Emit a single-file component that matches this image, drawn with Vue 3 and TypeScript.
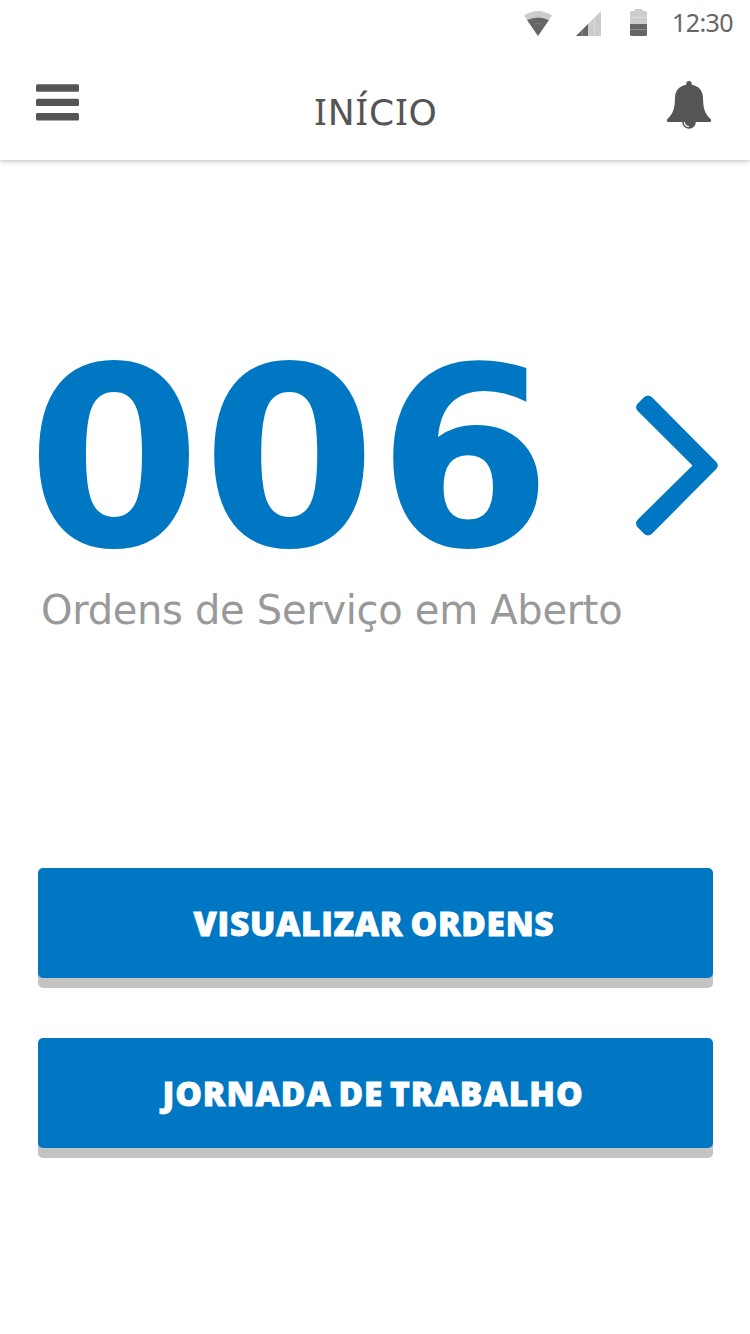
<script setup lang="ts">
import { ref } from 'vue'

interface Action {
  id: string
  label: string
}

const time = ref('12:30')
const openOrders = ref('006')
const actions: Action[] = [
  { id: 'orders', label: 'VISUALIZAR ORDENS' },
  { id: 'journey', label: 'JORNADA DE TRABALHO' },
]
</script>

<template>
  <div class="screen">
    <header class="header">
      <div class="status">
        <svg class="wifi" width="28" height="25" viewBox="0 0 28 25">
          <path fill="#ccc" d="M0 4.500Q14-4.500 28 4.500L14 25Z" />
          <path fill="#666" d="M3.100 9Q14 4 24.900 9L14 25Z" />
          <path fill="none" stroke="#858585" stroke-width=".7" d="M10.500 13q3.500-1.400 7 0M7 10q1-1 2-.8" />
        </svg>
        <svg class="signal" width="26" height="25" viewBox="0 0 26 25">
          <path fill="#ccc" d="M25 0V25H0Z" />
          <path fill="#666" d="M12 13V25H0Z" />
          <path fill="none" stroke="#e2e2e2" stroke-width=".7" d="M18.500 6.500V25" />
          <path fill="none" stroke="#999" stroke-width=".7" d="M6.300 18.700V25" />
        </svg>
        <svg class="battery" width="17" height="27" viewBox="0 0 17 27">
          <path fill="#ccc" d="M4.500 0h8v2H16l1 1v12H0V3l1-1h3.500Z" />
          <path fill="#666" d="M0 15h17v11l-1 1H1l-1-1Z" />
          <path stroke="#e2e2e2" stroke-width=".8" d="M0 8.500H17" />
          <path stroke="#999" stroke-width=".8" d="M0 20.500H17" />
        </svg>
        <span class="time">{{ time }}</span>
      </div>
      <div class="bar">
        <button class="icon-button" aria-label="Menu">
          <svg class="menu" width="43" height="37" viewBox="0 0 43 37" fill="#555">
            <rect y="0.300" width="43" height="7.500" rx="1.500" />
            <rect y="14.700" width="43" height="7.300" rx="1.500" />
            <rect y="29" width="43" height="7.500" rx="1.500" />
          </svg>
        </button>
        <h1 class="title"><span class="i">I</span>N<span class="i">Í</span>C<span class="i">I</span>O</h1>
        <button class="icon-button" aria-label="Notificações">
          <svg class="bell" width="46" height="49" viewBox="0 0 46 49">
            <path fill="#555" d="M20.300 4.800V3.600a2.700 2.700 0 0 1 5.400 0v1.200C32 5.800 37 10.500 37 17.500C37 29 39.500 34.500 44 38.400C46 40 45 42 43.300 42H2.700C1 42 0 40 2 38.400C6.500 34.500 9 29 9 17.500C9 10.500 14 5.800 20.300 4.800Z" />
            <circle cx="23" cy="42" r="6.800" fill="#555" />
            <path fill="none" stroke="#fff" stroke-width="1.200" stroke-linecap="round" d="M18.400 42.600A4.700 4.700 0 0 0 22.500 46.500" />
          </svg>
        </button>
      </div>
    </header>

    <main class="content">
      <section class="summary">
        <div class="count-row">
          <strong class="count">{{ openOrders }}</strong>
          <svg class="chevron" width="82" height="141" viewBox="0 0 82 141" fill="#0077c3">
            <path d="M8 2.200Q12 -1.300 16 2.200L80.200 67Q83.500 70.500 80.200 74L16 138.700Q12 142.200 8 138.700L1.800 132.500Q-1.700 128.500 1.800 124.500L56.500 70.500L1.800 16Q-1.700 12 1.800 8.500Z" />
          </svg>
        </div>
        <p class="caption">Ordens de Serviço em Aberto</p>
      </section>
      <nav class="actions">
        <button v-for="action in actions" :key="action.id" class="action" :class="action.id">
          <span>{{ action.label }}</span>
        </button>
      </nav>
    </main>
  </div>
</template>

<style>
body {
  margin: 0;
  background: #fff;
}
</style>

<style scoped>
.screen {
  width: 750px;
  height: 1334px;
  overflow: hidden;
  background: #fff;
  font-family: "DejaVu Sans", Verdana, sans-serif;
}
.header {
  box-sizing: border-box;
  height: 160px;
  box-shadow: 0 1px 5px rgba(0, 0, 0, .28);
}
.status {
  display: flex;
  align-items: flex-start;
  justify-content: flex-end;
  height: 46px;
  padding-right: 17px;
}
.wifi { margin: 11px 24px 0 0; }
.signal { margin: 11px 28px 0 0; }
.battery { margin: 9px 25px 0 0; }
.time {
  width: 61px;
  margin-top: 5px;
  color: #666;
  font: 25px/34px "Noto Sans", sans-serif;
  letter-spacing: -.6px;
  white-space: nowrap;
}
.bar {
  display: flex;
  align-items: flex-start;
  justify-content: space-between;
  padding: 34px 38px 0 36px;
}
.icon-button {
  padding: 0;
  border: 0;
  background: none;
}
.icon-button svg { display: block; }
.menu { margin-top: 4px; }
.title {
  display: flex;
  align-items: baseline;
  margin: 10px 0 0 4px;
  color: #555;
  font-weight: 400;
  font-size: 36px;
  line-height: 42px;
  letter-spacing: -.6px;
}
.title .i {
  width: 15px;
  font-family: "Noto Sans", sans-serif;
  font-size: 36.700px;
  text-align: center;
}
.summary {
  height: 508px;
  padding: 200px 32px 0 27px;
}
.count-row {
  display: flex;
  align-items: flex-start;
  justify-content: space-between;
  height: 190px;
}
.count {
  color: #0077c3;
  font-size: 250px;
  line-height: 197px;
  letter-spacing: 1.400px;
}
.chevron { margin-top: 35px; }
.caption {
  margin: 35px 0 0 14px;
  color: #999;
  font-size: 40px;
  line-height: 50px;
  letter-spacing: -.3px;
  white-space: nowrap;
}
.actions {
  display: flex;
  flex-direction: column;
  gap: 60px;
  padding: 0 37px 0 38px;
}
.action {
  height: 110px;
  padding: 0;
  border: 0;
  border-radius: 5px;
  background: #0077c3;
  box-shadow: 0 10px #c3c3c3;
  color: #fff;
  font: 800 33.500px/110px "Open Sans", sans-serif;
  letter-spacing: .7px;
  word-spacing: -2px;
  white-space: nowrap;
  -webkit-text-stroke: .8px #fff;
}
.orders { padding-right: 3px; }
.journey {
  padding-right: 5px;
  letter-spacing: 1px;
  word-spacing: -3px;
}
</style>
